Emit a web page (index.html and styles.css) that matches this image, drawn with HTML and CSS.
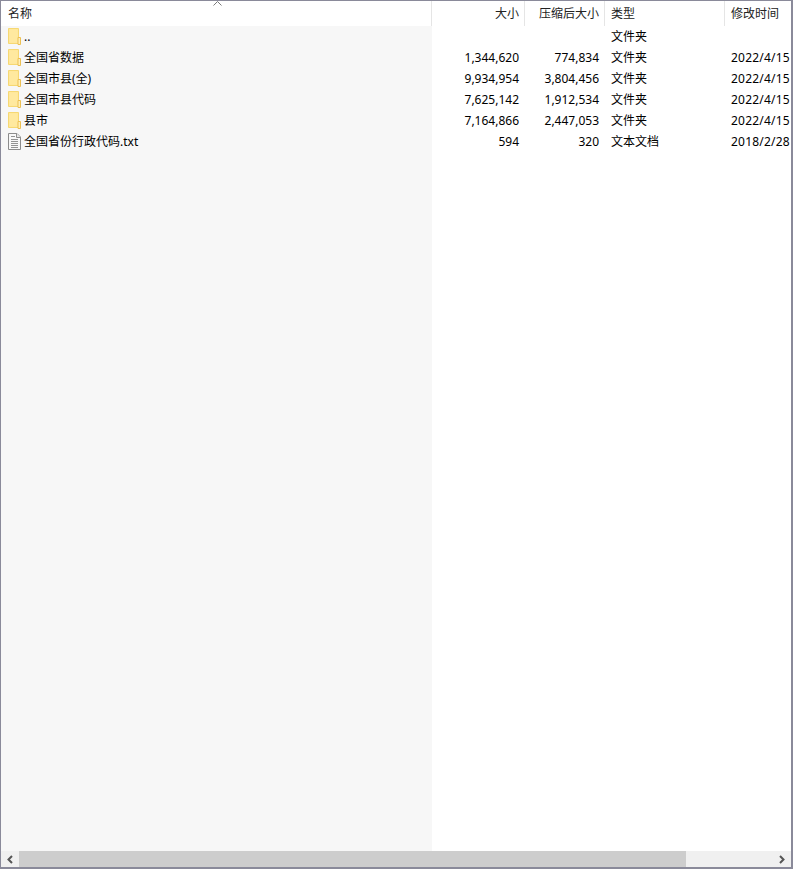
FILE: index.html
```html
<!DOCTYPE html>
<html lang="zh-CN">
<head>
<meta charset="utf-8">
<title>文件列表</title>
<link rel="stylesheet" href="styles.css">
</head>
<body>
<svg class="defs" width="0" height="0" aria-hidden="true">
  <symbol id="folder" viewBox="0 0 13 17">
    <path d="M.5.5h10v15H.5z" fill="#ffe797" stroke="#f6d873"/>
    <path d="M1.500 1.500h8v13h-8z" fill="#ffe99f"/>
    <path d="M10 9.500h2.500v7H10z" fill="#fff0b8" stroke="#ecc054"/>
  </symbol>
  <symbol id="doc" viewBox="0 0 13 17">
    <path d="M.5.500h8.500l3.500 3.500v12.500H.5z" fill="#f8f8f8" stroke="#8c8c8c"/>
    <path d="M8.500.5v4h4" fill="#e6e6e6" stroke="#8c8c8c"/>
    <path d="M3 3.500h4M3 6.500h7M3 8.500h7M3 10.500h7M3 12.500h7M3 14.500h7" stroke="#939393"/>
  </symbol>
</svg>
<main class="window">
  <div class="list">
    <div class="row header">
      <div class="cell name head-cell">名称<svg class="sort" width="9" height="5" viewBox="0 0 9 5"><path d="M.5 4.500l4-4 4 4" fill="none" stroke="#7a7a7a"/></svg></div>
      <div class="cell num head-cell">大小</div>
      <div class="cell num head-cell">压缩后大小</div>
      <div class="cell text head-cell">类型</div>
      <div class="cell text head-cell">修改时间</div>
    </div>
    <div class="body">
      <div class="row">
        <div class="cell name"><svg class="icon"><use href="#folder"/></svg>..</div>
        <div class="cell num"></div><div class="cell num"></div>
        <div class="cell text">文件夹</div><div class="cell date"></div>
      </div>
      <div class="row">
        <div class="cell name"><svg class="icon"><use href="#folder"/></svg>全国省数据</div>
        <div class="cell num">1,344,620</div><div class="cell num">774,834</div>
        <div class="cell text">文件夹</div><div class="cell date">2022/4/15</div>
      </div>
      <div class="row">
        <div class="cell name"><svg class="icon"><use href="#folder"/></svg>全国市县(全)</div>
        <div class="cell num">9,934,954</div><div class="cell num">3,804,456</div>
        <div class="cell text">文件夹</div><div class="cell date">2022/4/15</div>
      </div>
      <div class="row">
        <div class="cell name"><svg class="icon"><use href="#folder"/></svg>全国市县代码</div>
        <div class="cell num">7,625,142</div><div class="cell num">1,912,534</div>
        <div class="cell text">文件夹</div><div class="cell date">2022/4/15</div>
      </div>
      <div class="row">
        <div class="cell name"><svg class="icon"><use href="#folder"/></svg>县市</div>
        <div class="cell num">7,164,866</div><div class="cell num">2,447,053</div>
        <div class="cell text">文件夹</div><div class="cell date">2022/4/15</div>
      </div>
      <div class="row">
        <div class="cell name"><svg class="icon"><use href="#doc"/></svg>全国省份行政代码.txt</div>
        <div class="cell num">594</div><div class="cell num">320</div>
        <div class="cell text">文本文档</div><div class="cell date">2018/2/28</div>
      </div>
    </div>
  </div>
  <div class="scrollbar">
    <div class="arrow"><svg width="8" height="9" viewBox="0 0 8 9"><path d="M6 1L2.500 4.500 6 8" fill="none" stroke="#555" stroke-width="2"/></svg></div>
    <div class="thumb"></div>
    <div class="track"></div>
    <div class="arrow"><svg width="8" height="9" viewBox="0 0 8 9"><path d="M2 1l3.500 3.500L2 8" fill="none" stroke="#555" stroke-width="2"/></svg></div>
  </div>
</main>
</body>
</html>
```

FILE: styles.css
```css
* { box-sizing: border-box; }

html, body {
  margin: 0;
  height: 100%;
  background: #ffffff;
}

.defs { position: absolute; }

.window {
  width: 793px;
  height: 869px;
  display: flex;
  flex-direction: column;
  overflow: hidden;
  border: 1px solid #8a8a9a;
  border-width: 1px 2px 2px 1px;
  font: 12px/21px "Noto Sans", "Noto Sans CJK SC", sans-serif;
  color: #000000;
}

.list {
  flex: 1;
  min-height: 0;
  display: flex;
  flex-direction: column;
  background: linear-gradient(to right, #f7f7f7 431px, #ffffff 431px);
}

.row {
  display: grid;
  grid-template-columns: 431px 93px 80px 120px 100px;
  height: 21px;
  white-space: nowrap;
}

.header {
  height: 25px;
  background: #ffffff;
}

.cell {
  min-width: 0;
  display: flex;
  align-items: center;
  overflow: hidden;
}

.name { padding-left: 7px; }
.num { justify-content: flex-end; padding-right: 6px; }
.text { padding-left: 6px; }
.date { padding-left: 6px; letter-spacing: 0.2px; }

.head-cell {
  position: relative;
  color: #222222;
  border-right: 1px solid #e5e5e5;
}

.head-cell:last-child { border-right: 0; }

.head-cell.num { padding-right: 5px; }

.sort {
  position: absolute;
  left: 212px;
  top: 0;
}

.body { flex: 1; }

.icon {
  width: 13px;
  height: 17px;
  margin-right: 3px;
  flex: none;
}

.scrollbar {
  display: flex;
  height: 16px;
  background: #f0f0f0;
}

.arrow {
  width: 18px;
  flex: none;
  display: flex;
  align-items: center;
  justify-content: center;
}

.thumb {
  width: 667px;
  background: #cdcdcd;
}

.track { flex: 1; }
```
